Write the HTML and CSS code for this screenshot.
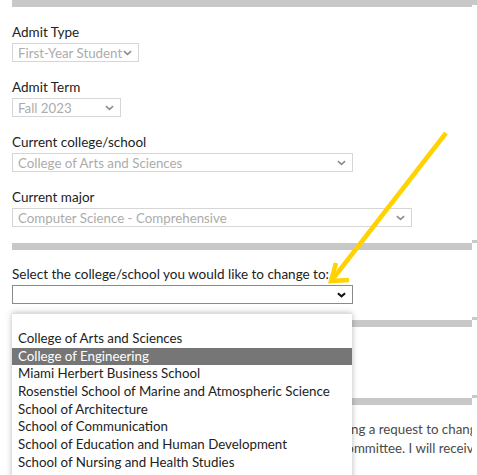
FILE: index.html
```html
<!DOCTYPE html>
<html>
<head>
<meta charset="utf-8">
<link rel="stylesheet" href="styles.css">
</head>
<body>
<div class="page">
  <div class="bar bar-top"></div>
  <div class="form">
    <div class="field">
      <div class="label">Admit Type</div>
      <div class="select disabled w-type"><span>First-Year Student</span><svg class="chev" viewBox="0 0 10 6"><path d="M1 1l4 3.5L9 1"/></svg></div>
    </div>
    <div class="field">
      <div class="label">Admit Term</div>
      <div class="select disabled w-term"><span>Fall 2023</span><svg class="chev" viewBox="0 0 10 6"><path d="M1 1l4 3.5L9 1"/></svg></div>
    </div>
    <div class="field">
      <div class="label">Current college/school</div>
      <div class="select disabled w-college"><span>College of Arts and Sciences</span><svg class="chev" viewBox="0 0 10 6"><path d="M1 1l4 3.5L9 1"/></svg></div>
    </div>
    <div class="field">
      <div class="label">Current major</div>
      <div class="select disabled w-major"><span>Computer Science - Comprehensive</span><svg class="chev" viewBox="0 0 10 6"><path d="M1 1l4 3.5L9 1"/></svg></div>
    </div>
    <div class="bar bar-mid"></div>
    <div class="field">
      <div class="label">Select the college/school you would like to change to:</div>
      <div class="select active w-college"><span></span><svg class="chev dark" viewBox="0 0 10 6"><path d="M1 1l4 3.5L9 1"/></svg></div>
    </div>
    <div class="bar bar-mid"></div>
    <div class="hidden-area"></div>
    <div class="bar bar-mid"></div>
    <div class="terms">
      <p class="line">By submitting this form, I do understand that I am submitting a request to change my college/school</p>
      <p class="line">and that this request will be reviewed by the admissions committee. I will receive an email notification</p>
    </div>
  </div>

  <div class="dropdown">
    <div class="opt empty"></div>
    <div class="opt">College of Arts and Sciences</div>
    <div class="opt selected">College of Engineering</div>
    <div class="opt">Miami Herbert Business School</div>
    <div class="opt">Rosenstiel School of Marine and Atmospheric Science</div>
    <div class="opt">School of Architecture</div>
    <div class="opt">School of Communication</div>
    <div class="opt">School of Education and Human Development</div>
    <div class="opt">School of Nursing and Health Studies</div>
    <div class="opt">School of Music</div>
  </div>

  <svg class="arrow" viewBox="0 0 477 475" width="477" height="475">
    <path d="M446 133 L332 280"/>
    <path d="M336 263 L331 281 L349 280"/>
  </svg>
</div>
</body>
</html>
```

FILE: styles.css
```css
html, body {
  margin: 0;
  padding: 0;
  background: #fff;
}
body {
  font-family: Lato, "Open Sans", sans-serif;
  color: #222;
  width: 477px;
  height: 475px;
  overflow: hidden;
}
.page {
  position: relative;
  width: 477px;
  height: 475px;
  overflow: hidden;
}
.bar {
  position: relative;
  height: 7px;
  background: #c8c8c8;
  width: 460px;
}
.bar::after {
  content: "";
  position: absolute;
  right: -5px;
  top: -3px;
  width: 5px;
  height: 3px;
  background: #c8c8c8;
}
.bar-top {
  margin-left: 12px;
}
.bar-top::after {
  top: 0;
  height: 5px;
}
.form {
  padding-left: 12px;
  padding-top: 16px;
}
.field {
  display: flex;
  flex-direction: column;
  align-items: flex-start;
  margin-bottom: 16px;
}
.label {
  font-size: 13.5px;
  line-height: 18px;
  height: 18px;
  margin-bottom: 2px;
  color: #222;
  white-space: nowrap;
}
.select {
  box-sizing: border-box;
  height: 19px;
  border: 1px solid #d6d6d6;
  display: flex;
  align-items: center;
  justify-content: space-between;
  padding: 0 6px 0 5px;
  font-size: 13.3px;
  color: #acacac;
  white-space: nowrap;
}
.select.active {
  border-color: #8a8a8a;
}
.w-type { width: 127px; }
.w-term { width: 109px; }
.w-college { width: 341px; }
.w-major { width: 400px; }
.chev {
  width: 9px;
  height: 6px;
  fill: none;
  stroke: #8e8e8e;
  stroke-width: 1.8;
}
.chev.dark {
  stroke: #111;
  stroke-width: 2.2;
}
.bar-mid {
  margin-bottom: 15px;
}
.hidden-area {
  height: 56px;
}
.terms {
  width: 460px;
  overflow: hidden;
}
.line {
  margin: 0;
  font-size: 13.3px;
  line-height: 19px;
  color: #4a4a4a;
  white-space: nowrap;
}
.dropdown {
  position: absolute;
  left: 12px;
  top: 313px;
  width: 340px;
  height: 200px;
  background: #fff;
  border-top: 1px solid #ddd;
  box-shadow: 0 0 6px rgba(0, 0, 0, 0.28);
}
.opt {
  height: 17.7px;
  line-height: 17.7px;
  padding-left: 6px;
  font-size: 13.3px;
  color: #222;
  white-space: nowrap;
}
.opt.empty {
  height: 16px;
}
.opt.selected {
  background: #767676;
  color: #fff;
}
.arrow {
  position: absolute;
  left: 0;
  top: 0;
  pointer-events: none;
}
.arrow path {
  fill: none;
  stroke: #ffd200;
  stroke-width: 4.5;
  stroke-linecap: butt;
  stroke-linejoin: miter;
}
```
